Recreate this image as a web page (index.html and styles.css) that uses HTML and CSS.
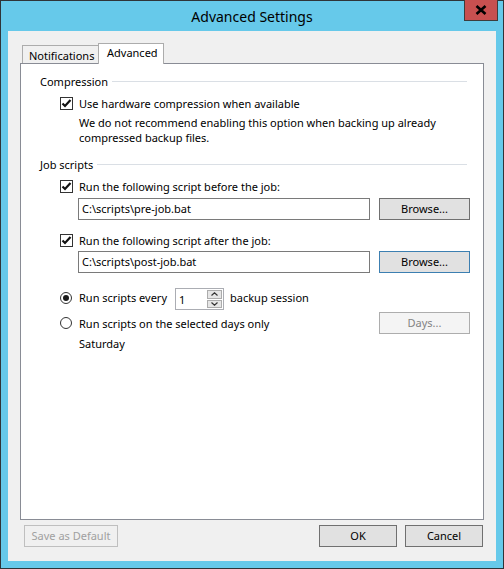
FILE: index.html
```html
<!DOCTYPE html>
<html>
<head>
<meta charset="utf-8">
<link rel="stylesheet" href="styles.css">
</head>
<body>
<div class="window">
  <div class="titlebar">Advanced Settings</div>
  <div class="close"><svg width="12" height="10" viewBox="0 0 12 10"><path d="M1.5 1 L10.5 9 M10.5 1 L1.5 9" stroke="#000" stroke-width="2.6" fill="none"/></svg></div>
  <div class="client">
    <div class="tabs">
      <div class="tab">Notifications</div>
      <div class="tab active">Advanced</div>
    </div>
    <div class="panel">
      <div class="heading"><span>Compression</span><div class="rule"></div></div>
      <div class="opt r1">
        <span class="check"><svg width="11" height="11" viewBox="0 0 11 11"><path d="M1.5 5.5 L4 8 L9.5 2" stroke="#111" stroke-width="2.2" fill="none"/></svg></span>
        <span>Use hardware compression when available</span>
      </div>
      <div class="desc">We do not recommend enabling this option when backing up already<br>compressed backup files.</div>

      <div class="heading h2"><span>Job scripts</span><div class="rule"></div></div>
      <div class="opt r2">
        <span class="check"><svg width="11" height="11" viewBox="0 0 11 11"><path d="M1.5 5.5 L4 8 L9.5 2" stroke="#111" stroke-width="2.2" fill="none"/></svg></span>
        <span>Run the following script before the job:</span>
      </div>
      <div class="fieldrow">
        <div class="textbox">C:\scripts\pre-job.bat</div>
        <div class="btn browse">Browse...</div>
      </div>
      <div class="opt r3">
        <span class="check"><svg width="11" height="11" viewBox="0 0 11 11"><path d="M1.5 5.5 L4 8 L9.5 2" stroke="#111" stroke-width="2.2" fill="none"/></svg></span>
        <span>Run the following script after the job:</span>
      </div>
      <div class="fieldrow f2">
        <div class="textbox">C:\scripts\post-job.bat</div>
        <div class="btn browse focus">Browse...</div>
      </div>

      <div class="radrow rr1">
        <span class="radio on"></span>
        <span>Run scripts every</span>
        <div class="spin">
          <span class="spinval">1</span>
          <div class="spinbtns">
            <div class="sb"><svg width="7" height="4" viewBox="0 0 7 4"><path d="M0.5 3.5 L3.5 0.8 L6.5 3.5" stroke="#333" stroke-width="1.2" fill="none"/></svg></div>
            <div class="sb"><svg width="7" height="4" viewBox="0 0 7 4"><path d="M0.5 0.5 L3.5 3.2 L6.5 0.5" stroke="#333" stroke-width="1.2" fill="none"/></svg></div>
          </div>
        </div>
        <span>backup session</span>
      </div>
      <div class="radrow rr2">
        <span class="radio"></span>
        <span class="grow">Run scripts on the selected days only</span>
        <div class="btn days">Days...</div>
      </div>
      <div class="sat">Saturday</div>
    </div>
    <div class="footer">
      <div class="btn disabled save">Save as Default</div>
      <div class="spacer"></div>
      <div class="btn foot">OK</div>
      <div class="btn foot">Cancel</div>
    </div>
  </div>
</div>
</body>
</html>
```

FILE: styles.css
```css
html, body {
  margin: 0;
  padding: 0;
}
body {
  font-family: "Noto Sans", "Open Sans", sans-serif;
  font-size: 11px;
  line-height: 15px;
  color: #000;
}
.window {
  position: relative;
  width: 504px;
  height: 569px;
  box-sizing: border-box;
  border: 1px solid #2f3438;
  background: #66c9ea;
  padding: 0 7px 7px 7px;
  display: flex;
  flex-direction: column;
}
.titlebar {
  height: 30px;
  line-height: 31px;
  text-align: center;
  font-size: 14px;
  color: #000;
}
.close {
  position: absolute;
  left: 463px;
  top: -1px;
  width: 34px;
  height: 21px;
  box-sizing: border-box;
  background: #c75050;
  border: 1px solid #3d3d3d;
  border-top: none;
  display: flex;
  align-items: center;
  justify-content: center;
}
.client {
  flex: 1;
  background: #f0f0f0;
  padding: 12px 12px 14px 12px;
  display: flex;
  flex-direction: column;
}
.tabs {
  display: flex;
  align-items: flex-end;
  height: 20px;
  padding-left: 2px;
  position: relative;
  z-index: 1;
}
.tab {
  width: 77px;
  height: 18px;
  box-sizing: border-box;
  border: 1px solid #acacac;
  border-bottom: none;
  background: #f0f0f0;
  padding-left: 6px;
  line-height: 19px;
}
.tab.active {
  width: 66px;
  height: 21px;
  margin-bottom: -1px;
  background: #fff;
  padding-left: 8px;
  line-height: 17px;
  margin-left: -1px;
}
.panel {
  height: 457px;
  box-sizing: border-box;
  background: #fff;
  border: 1px solid #898c95;
  padding: 10px 16px 0 19px;
}
.heading {
  display: flex;
  align-items: center;
  height: 15px;
}
.heading .rule {
  flex: 1;
  height: 1px;
  background: #dadfe5;
  margin-left: 4px;
}
.h2 { margin-top: 12px; }
.opt {
  display: flex;
  align-items: center;
  height: 15px;
  padding-left: 20px;
}
.r1 { margin-top: 7px; }
.r2 { margin-top: 7px; }
.r3 { margin-top: 13px; }
.check {
  width: 13px;
  height: 13px;
  box-sizing: border-box;
  border: 1px solid #333;
  background: #fff;
  margin-right: 6px;
  display: flex;
  align-items: center;
  justify-content: center;
}
.desc {
  margin-top: 4px;
  padding-left: 39px;
}
.fieldrow {
  display: flex;
  margin-top: 4px;
  margin-right: -3px;
  padding-left: 38px;
}
.f2 { margin-top: 3px; }
.textbox {
  width: 292px;
  height: 22px;
  box-sizing: border-box;
  border: 1px solid #7a7a7a;
  background: #fff;
  line-height: 20px;
  padding-left: 3px;
}
.btn {
  height: 22px;
  box-sizing: border-box;
  border: 1px solid #707070;
  background: #e1e1e1;
  text-align: center;
  line-height: 20px;
}
.browse {
  width: 91px;
  margin-left: 9px;
}
.browse.focus {
  border-color: #3c7fb1;
}
.radrow {
  display: flex;
  align-items: center;
  padding-left: 20px;
  margin-right: -3px;
}
.rr1 {
  margin-top: 15px;
  height: 22px;
}
.rr1 > span:not(.radio) { margin-top: -3px; }
.rr1 .radio { margin-top: -3px; }
.rr2 {
  margin-top: 2px;
  height: 22px;
}
.radio {
  width: 12px;
  height: 12px;
  box-sizing: border-box;
  border: 1px solid #333;
  border-radius: 50%;
  background: #fff;
  margin-right: 7px;
  display: flex;
  align-items: center;
  justify-content: center;
}
.radio.on::after {
  content: "";
  width: 6px;
  height: 6px;
  border-radius: 50%;
  background: #1a1a1a;
}
.spin {
  width: 49px;
  height: 22px;
  box-sizing: border-box;
  border: 1px solid #abadb3;
  background: #fff;
  margin: 0 6px 0 8px;
  display: flex;
  align-items: center;
  padding: 1px;
}
.spinval {
  flex: 1;
  padding-left: 2px;
}
.spinbtns {
  width: 15px;
  height: 18px;
  display: flex;
  flex-direction: column;
  gap: 1px;
}
.sb {
  flex: 1;
  box-sizing: border-box;
  border: 1px solid #acacac;
  background: #e6e6e6;
  display: flex;
  align-items: center;
  justify-content: center;
}
.grow { flex: 1; }
.days {
  width: 91px;
  background: #f4f4f4;
  border-color: #adadad;
  color: #838383;
}
.sat {
  margin-top: 2px;
  padding-left: 39px;
}
.footer {
  display: flex;
  margin-top: 5px;
  height: 22px;
  padding: 0 1px 0 4px;
  gap: 8px;
}
.spacer { flex: 1; }
.save {
  width: 94px;
  background: #f0f0f0;
  border-color: #bfbfbf;
  color: #a0a0a0;
}
.foot {
  width: 78px;
}
```
